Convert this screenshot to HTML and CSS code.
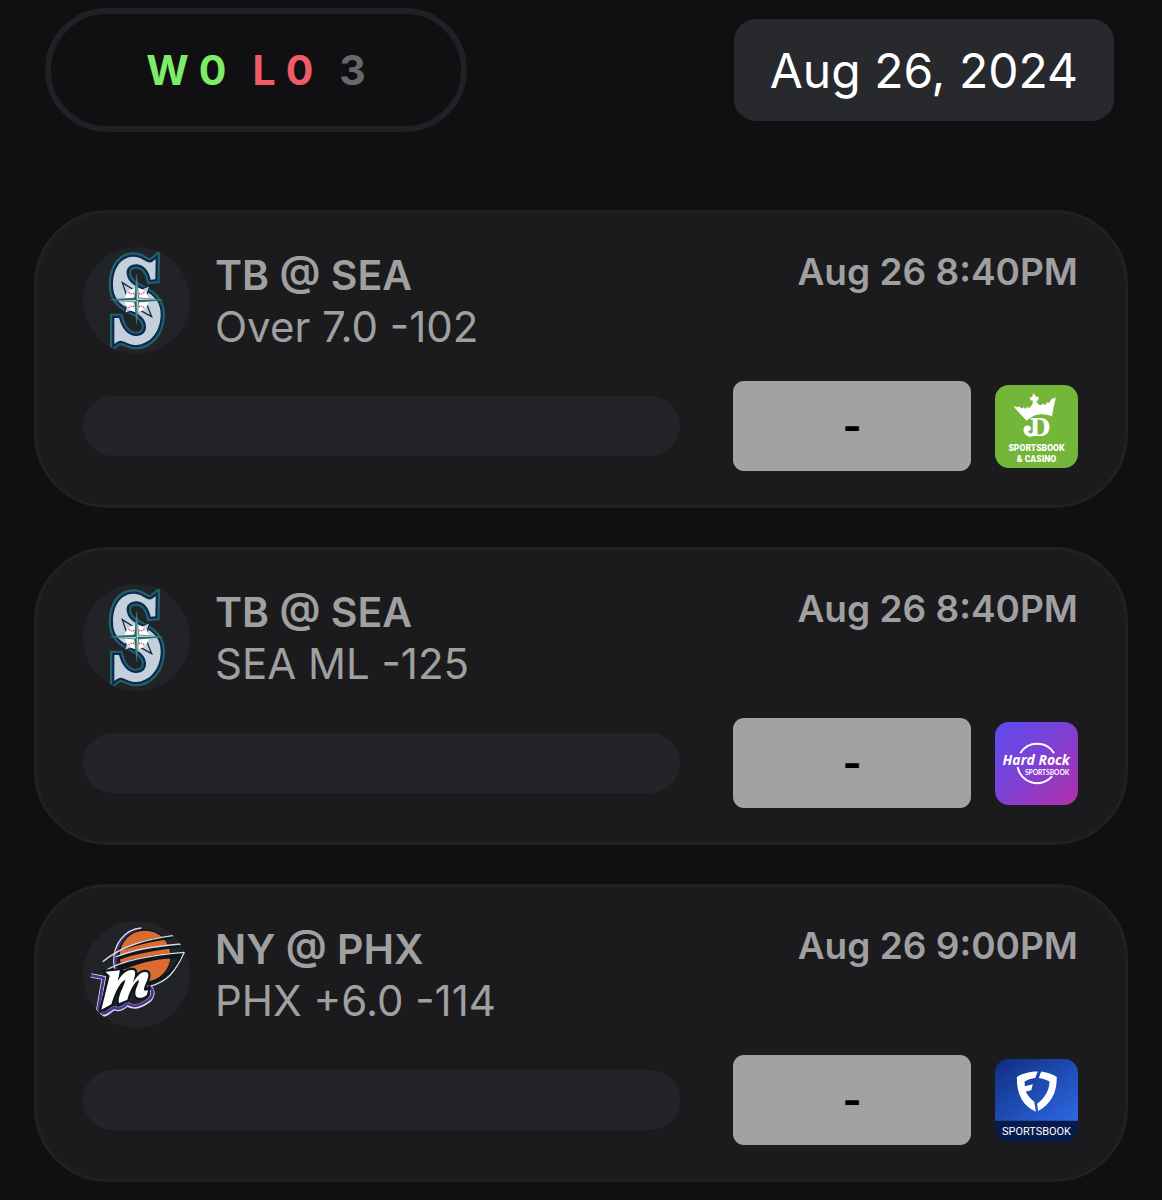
FILE: index.html
```
<!DOCTYPE html>
<html lang="en">
<head>
    <meta charset="UTF-8">
    <meta name="viewport" content="width=device-width, initial-scale=1.0">
    <title>My Bets</title>
    <link rel="stylesheet" href="styles.css">
</head>
<body>
    <!-- shared artwork -->
    <svg class="sprite" aria-hidden="true">
        <defs>
            <path id="sea-mark" d="M242 57 L241 118 L227 119 C222 94 208 75 186 73 C166 72 153 84 155 101 C158 127 181 138 207 151 C242 169 258 191 257 226 C256 276 225 313 184 315 C164 315 151 304 138 302 C130 302 125 306 118 312 L118 234 L132 234 C140 264 157 286 181 288 C203 289 214 276 213 258 C211 231 186 219 162 207 C132 191 114 172 114 134 C114 83 139 51 174 50 C195 49 207 62 220 67 C229 69 235 63 242 57 Z"/>
            <path id="phx-mark" d="M91 179 L135 175 L128 207 C142 185 156 172 174 174 C185 176 180 194 173 213 C187 191 200 175 216 181 C226 188 216 206 209 223 C204 237 208 239 219 234 L216 248 C199 263 180 260 181 242 C182 228 193 211 192 205 C180 206 164 237 157 263 L132 274 C126 253 149 220 151 204 C138 207 121 237 109 277 L79 293 L104 191 Z"/>
        </defs>
        <symbol id="mariners" viewBox="24 21 321 321">
            <use href="#sea-mark" class="sea-teal"/>
            <use href="#sea-mark" class="sea-navy"/>
            <use href="#sea-mark" class="sea-silver"/>
            <g fill="#c4ced4" stroke="#0d2b4c" stroke-width="4">
                <path d="M142 128 L177 150 L156 170 Z M230 230 L194 210 L214 190 Z M225 136 L214 170 L194 150 Z M148 221 L156 190 L177 210 Z"/>
            </g>
            <circle cx="185" cy="180" r="36" fill="#fff"/>
            <path d="M161 156 q9 10 17 3 M208 156 q-9 10 -17 3 M161 204 q9 -10 17 -3 M208 204 q-9 -10 -17 -3" fill="none" stroke="#cf4455" stroke-width="4" stroke-dasharray="4 3"/>
            <path d="M185 102 L191 174 L263 180 L191 186 L185 253 L179 186 L105 179 L179 174 Z" fill="#c4ced4" stroke="#1c6763" stroke-width="2"/>
            <path d="M185 180 V108 L179 174 Z M185 180 H256 L191 186 Z M185 180 V248 L179 186 Z M185 180 H112 L179 174 Z" fill="#1c6763"/>
        </symbol>
    </svg>

    <header class="header">
        <div class="record">
            <span class="record-group wins"><span>W</span><span>0</span></span>
            <span class="record-group losses"><span>L</span><span>0</span></span>
            <span class="record-group pending">3</span>
        </div>
        <button class="date-button" type="button">Aug 26, 2024</button>
    </header>

    <main class="bets">
        <article class="bet">
            <div class="bet-top">
                <svg class="team" role="img" aria-label="Seattle"><use href="#mariners"/></svg>
                <div class="bet-info">
                    <h2 class="matchup">TB @ SEA</h2>
                    <p class="pick">Over 7.0 -102</p>
                </div>
                <time class="start" datetime="2024-08-26T20:40">Aug 26 8:40PM</time>
            </div>
            <div class="bet-bottom">
                <div class="track"></div>
                <button class="result" type="button">-</button>
                <a class="book" href="#" aria-label="DraftKings">
                    <svg viewBox="30 30 250 250">
                        <rect x="30" y="30" width="250" height="250" fill="#74b63a"/>
                        <path d="M85 94 L99 97 L103 94 L109 101 L116 97 L122 102 L127 96 L134 99 L143 88 L144 77 L137 76 L135 68 L142 66 L145 55 L151 60 L153 65 L162 67 L160 76 L154 78 L160 88 L169 91 L175 86 L181 91 L187 82 L193 84 L200 72 L213 68 L210 82 L207 94 L202 125 C178 114 148 116 125 138 Z" fill="#fff"/>
                        <text x="134" y="184" class="dk-letter">D</text>
                        <path d="M152 176 C146 192 119 188 116 168 C114 152 132 147 138 158 C140 166 133 171 129 168 C133 180 143 177 148 168 Z" fill="#fff"/>
                        <text x="155" y="228" class="dk-text">SPORTSBOOK</text>
                        <text x="155" y="261" class="dk-text">&amp; CASINO</text>
                    </svg>
                </a>
            </div>
        </article>

        <article class="bet">
            <div class="bet-top">
                <svg class="team" role="img" aria-label="Seattle"><use href="#mariners"/></svg>
                <div class="bet-info">
                    <h2 class="matchup">TB @ SEA</h2>
                    <p class="pick">SEA ML -125</p>
                </div>
                <time class="start" datetime="2024-08-26T20:40">Aug 26 8:40PM</time>
            </div>
            <div class="bet-bottom">
                <div class="track"></div>
                <button class="result" type="button">-</button>
                <a class="book" href="#" aria-label="Hard Rock">
                    <svg viewBox="30 27 250 250">
                        <defs>
                            <linearGradient id="hardrock" x1="0" y1="0" x2="1" y2="1">
                                <stop offset="0" stop-color="#5b4df0"/>
                                <stop offset="0.5" stop-color="#8040d3"/>
                                <stop offset="1" stop-color="#b22fa9"/>
                            </linearGradient>
                        </defs>
                        <rect x="30" y="27" width="250" height="250" fill="url(#hardrock)"/>
                        <path d="M106 121 A60 60 0 0 1 208 121 M98 163 A60 60 0 0 0 202 191" fill="none" stroke="#fff" stroke-width="6"/>
                        <text x="154" y="157" class="hr-name">Hard Rock</text>
                        <text x="187" y="186" class="hr-text">SPORTSBOOK</text>
                    </svg>
                </a>
            </div>
        </article>

        <article class="bet">
            <div class="bet-top">
                <svg class="team" viewBox="24 27 321 321" role="img" aria-label="Phoenix">
                    <!-- ball -->
                    <path d="M219 222 C170 212 118 205 116 150 C115 98 148 52 199 48" fill="none" stroke="#d7d9e2" stroke-width="4"/>
                    <path d="M214 215 C160 210 122 190 122 145 C122 99 151 59 202 54" fill="none" stroke="#4a3190" stroke-width="6"/>
                    <circle cx="209" cy="132" r="80" fill="#0b161d"/>
                    <circle cx="210" cy="132" r="76" fill="#dc6b32"/>
                    <!-- streaks -->
                    <path d="M125 120 C170 93 225 78 298 70 L292 80 C220 90 175 101 131 119 Z" fill="#0b161d"/>
                    <path d="M121 135 C175 113 235 102 319 95 L308 107 C235 115 180 126 132 143 Z" fill="#0b161d"/>
                    <path d="M115 164 C165 139 240 126 328 121 L316 139 C260 139 203 148 151 172 Z" fill="#0b161d"/>
                    <path d="M83 149 C145 99 214 82 298 70 M122 135 C175 112 235 103 318 96 M83 180 C145 143 229 130 328 121" fill="none" stroke="#d7d9e2" stroke-width="4"/>
                    <path d="M328 121 C300 181 278 208 225 223" fill="none" stroke="#d7d9e2" stroke-width="4"/>
                    <path d="M315 137 C292 177 268 203 222 216" fill="none" stroke="#0b161d" stroke-width="6"/>
                    <!-- winged mark -->
                    <path d="M48 190 L86 198 L70 292 L84 308 C101 308 107 289 120 289 C130 296 150 285 157 276 C178 294 207 276 224 263 C238 245 232 232 225 226" fill="none" stroke="#d7d9e2" stroke-width="13"/>
                    <path d="M48 190 L86 198 L70 292 L84 304 C101 304 107 287 120 287 C130 296 150 283 157 274 C178 292 207 274 224 261 C238 245 232 232 225 226" fill="none" stroke="#4a3190" stroke-width="8"/>
                    <use href="#phx-mark" class="phx-dark"/>
                    <use href="#phx-mark" class="phx-white"/>
                </svg>
                <div class="bet-info">
                    <h2 class="matchup">NY @ PHX</h2>
                    <p class="pick">PHX +6.0 -114</p>
                </div>
                <time class="start" datetime="2024-08-26T21:00">Aug 26 9:00PM</time>
            </div>
            <div class="bet-bottom">
                <div class="track"></div>
                <button class="result" type="button">-</button>
                <a class="book" href="#" aria-label="FanDuel">
                    <svg viewBox="30 30 250 250">
                        <defs>
                            <linearGradient id="fanduel" x1="0" y1="0" x2="1" y2="1">
                                <stop offset="0" stop-color="#102d80"/>
                                <stop offset="1" stop-color="#2d69e3"/>
                            </linearGradient>
                        </defs>
                        <rect x="30" y="30" width="250" height="250" fill="#071b4c"/>
                        <rect x="30" y="30" width="250" height="186" fill="url(#fanduel)"/>
                        <path d="M159 68 L151 87 C139 88 126 93 119 98 L120 112 L144 106 L139 124 L123 128 C127 139 136 150 148 158 L153 189 C118 173 94 140 96 84 C111 74 137 68 159 68 Z" fill="#fff"/>
                        <path d="M169 68 C185 70 204 76 216 84 C217 132 198 165 160 187 L157 165 C181 147 194 124 194 98 C184 91 173 89 162 87 Z" fill="#fff"/>
                        <text x="155" y="258" class="fd-text">SPORTSBOOK</text>
                    </svg>
                </a>
            </div>
        </article>
    </main>
</body>
</html>
```
FILE: styles.css
```
* {
    margin: 0;
    padding: 0;
    box-sizing: border-box;
}

body {
    background: #101012;
    color: #a0a0a1;
    font-family: Inter, 'Liberation Sans', sans-serif;
    padding: 8px 34px 18px;
}

button {
    border: none;
    font-family: inherit;
    cursor: pointer;
}

.sprite {
    position: absolute;
    width: 0;
    height: 0;
}

.header {
    display: flex;
    justify-content: space-between;
    align-items: center;
    padding: 0 14px 0 11px;
    margin-bottom: 78px;
}

.record {
    display: flex;
    justify-content: center;
    align-items: center;
    gap: 26px;
    width: 422px;
    height: 124px;
    border: 6px solid #1f2124;
    border-radius: 62px;
    font-size: 41px;
    font-weight: 700;
}

.record-group {
    display: flex;
    gap: 10px;
}

.wins { color: #7eec67; }
.losses { color: #f05b66; }
.pending { color: #68686b; }

.date-button {
    height: 102px;
    padding: 0 36px;
    border-radius: 22px;
    background: #28292d;
    color: #fff;
    font-size: 48px;
}

.bets {
    display: flex;
    flex-direction: column;
    gap: 39px;
}

.bet {
    display: flex;
    flex-direction: column;
    gap: 27px;
    padding: 34px 47px 34px 46px;
    background: #1b1b1d;
    border: 3px solid #1f2123;
    border-radius: 74px;
}

.bet-top {
    display: flex;
    align-items: flex-start;
    gap: 25px;
}

.team {
    flex: none;
    width: 107px;
    height: 107px;
    border-radius: 50%;
    background: #212327;
}

.bet-info {
    flex: 1;
    padding-top: 3px;
}

.matchup,
.pick {
    line-height: 51px;
    white-space: nowrap;
}

.matchup {
    font-size: 41px;
    font-weight: 600;
}

.pick {
    font-size: 42px;
    font-weight: 400;
}

.start {
    font-size: 37px;
    font-weight: 600;
    line-height: 50px;
    white-space: nowrap;
}

.bet-bottom {
    display: flex;
    align-items: center;
}

.track {
    flex: 1;
    height: 60px;
    margin-right: 53px;
    border-radius: 30px;
    background: #232428;
}

.result {
    width: 238px;
    height: 90px;
    margin-right: 24px;
    border-radius: 11px;
    background: #a2a2a2;
    color: #000;
    font-size: 41px;
    font-weight: 700;
}

.book {
    flex: none;
    width: 83px;
    height: 83px;
    border-radius: 14px;
    overflow: hidden;
}

.book svg {
    display: block;
    width: 100%;
    height: 100%;
}

.book text {
    fill: #fff;
    text-anchor: middle;
}

/* team marks */
.sea-teal { fill: #246069; stroke: #246069; stroke-width: 26; }
.sea-navy { fill: #0b2950; stroke: #0b2950; stroke-width: 13; }
.sea-silver { fill: #c4d0dc; stroke: none; }
.phx-dark { fill: #0b161d; stroke: #0b161d; stroke-width: 13; }
.phx-white { fill: #fff; stroke: none; }

/* sportsbook lettering */
.book .dk-letter {
    font: 700 72px 'DejaVu Serif', serif;
    text-anchor: start;
}

.dk-text { font: 900 26px Roboto, sans-serif; }
.hr-name { font: italic 700 42px 'Open Sans', sans-serif; }
.hr-text { font: 700 20px Lato, sans-serif; }
.fd-text { font: 400 33px Roboto, sans-serif; }
```
